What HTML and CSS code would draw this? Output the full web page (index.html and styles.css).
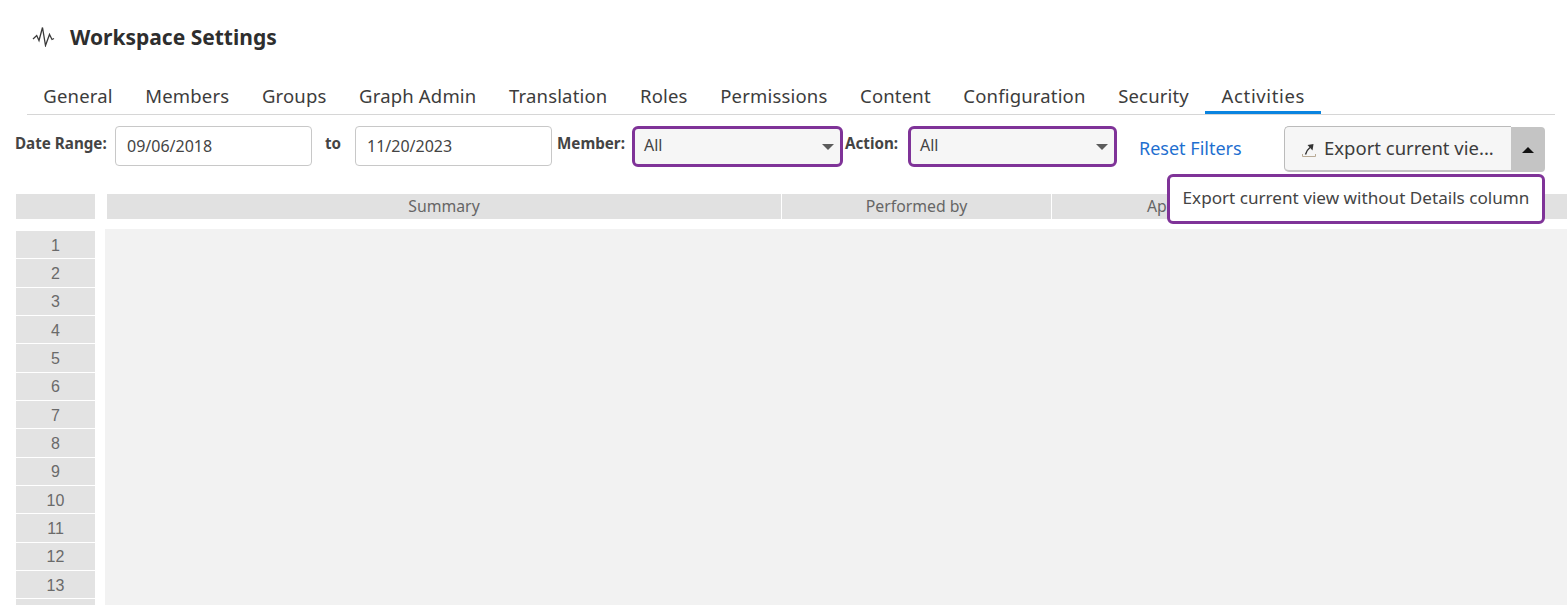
FILE: index.html
```html
<!DOCTYPE html>
<html lang="en">
<head>
  <meta charset="UTF-8">
  <title>Workspace Settings</title>
  <link rel="stylesheet" href="styles.css">
</head>
<body>

<!-- HEADER -->
<header class="page-header">
  <svg class="pulse-icon" width="24" height="20" viewBox="0 0 24 20" fill="none" stroke="#3a3a3a" stroke-width="1.300">
    <path d="M2 12 L5.700 8.500 L8 13.500 L11.500 0.500 L14.500 18.500 L18.500 7.500 L21 12.500 L23 11.500"/>
  </svg>
  <h1 class="page-title">Workspace Settings</h1>
</header>

<!-- TABS -->
<nav class="tabs">
  <a href="#" class="tab">General</a>
  <a href="#" class="tab">Members</a>
  <a href="#" class="tab">Groups</a>
  <a href="#" class="tab">Graph Admin</a>
  <a href="#" class="tab">Translation</a>
  <a href="#" class="tab">Roles</a>
  <a href="#" class="tab">Permissions</a>
  <a href="#" class="tab">Content</a>
  <a href="#" class="tab">Configuration</a>
  <a href="#" class="tab">Security</a>
  <a href="#" class="tab active">Activities</a>
</nav>

<!-- FILTERS -->
<form class="filters">
  <label class="filter-label label-date">Date Range:</label>
  <input type="text" class="date-input" value="09/06/2018">
  <label class="filter-label label-to">to</label>
  <input type="text" class="date-input" value="11/20/2023">
  <label class="filter-label label-member">Member:</label>
  <div class="select select-member">All<span class="caret"></span></div>
  <label class="filter-label label-action">Action:</label>
  <div class="select select-action">All<span class="caret"></span></div>
  <a href="#" class="reset-link">Reset Filters</a>
  <div class="export">
    <button type="button" class="export-btn">
      <svg class="export-icon" width="14" height="16" viewBox="0 0 14 16" fill="none">
        <path d="M0.500 12 V14.500 H13.500 V12" stroke="#b9ab96" stroke-width="1"/>
        <path d="M3.500 12.500 C4 10 5.500 7.500 8 5.500" stroke="#333" stroke-width="1.400"/>
        <path d="M5.500 3 L11.500 2 L10.500 8.500 Z" fill="#333"/>
      </svg>
      <span>Export current vie...</span>
    </button>
    <button type="button" class="export-toggle"><span class="caret-up"></span></button>
    <div class="export-menu">Export current view without Details column</div>
  </div>
</form>

<!-- GRID -->
<div class="grid-head">
  <div class="head-gutter"></div>
  <div class="head-cell cell-summary">Summary</div>
  <div class="head-cell cell-performed">Performed by</div>
  <div class="head-cell cell-applied">Ap</div>
</div>

<div class="grid-body">
  <div class="row-numbers">
    <div class="row-num">1</div>
    <div class="row-num">2</div>
    <div class="row-num">3</div>
    <div class="row-num">4</div>
    <div class="row-num">5</div>
    <div class="row-num">6</div>
    <div class="row-num">7</div>
    <div class="row-num">8</div>
    <div class="row-num">9</div>
    <div class="row-num">10</div>
    <div class="row-num">11</div>
    <div class="row-num">12</div>
    <div class="row-num">13</div>
    <div class="row-num"></div>
  </div>
  <div class="grid-content"></div>
</div>

</body>
</html>
```

FILE: styles.css
```css
html, body {
  height: 605px;
  overflow: hidden;
}

body {
  margin: 0;
  font-family: "Noto Sans", Arial, sans-serif;
  color: #333;
  background-color: #fff;
}

.page-header {
  display: flex;
  align-items: center;
  height: 73px;
  padding: 0 0 2px 31px;
}

.pulse-icon {
  margin-right: 15px;
}

.page-title {
  margin: 0;
  font-size: 21px;
  font-weight: 700;
  color: #2e2e2e;
}

.tabs {
  display: flex;
  height: 39px;
  margin: 0 12px 0 27px;
  border-bottom: 1px solid #d6d6d6;
}

.tab {
  display: flex;
  align-items: center;
  height: 39px;
  padding: 2px 16.300px 0;
  box-sizing: border-box;
  font-size: 18.500px;
  letter-spacing: 0.170px;
  color: #3c3c3c;
  text-decoration: none;
}

.tab.active {
  border-bottom: 3px solid #0a84e0;
  padding-top: 5px;
  letter-spacing: 0.650px;
}

.filters {
  display: flex;
  align-items: flex-start;
  height: 79px;
  padding: 11px 0 0 15px;
  box-sizing: border-box;
}

.filter-label {
  margin-top: 7px;
  font-size: 15.200px;
  font-weight: 700;
  color: #444;
}

.label-date {
  width: 100px;
}

.label-to {
  width: 30px;
  padding-left: 13px;
}

.label-member {
  width: 75px;
  margin-left: 5px;
}

.label-action {
  width: 63px;
  margin-left: 2px;
}

.date-input {
  width: 197px;
  height: 40px;
  padding: 0 11px;
  box-sizing: border-box;
  border: 1px solid #c8c8c8;
  border-radius: 4px;
  font-family: inherit;
  font-size: 16px;
  color: #444;
}

.select {
  display: flex;
  align-items: center;
  justify-content: space-between;
  height: 41px;
  padding: 0 6px 3px 9px;
  box-sizing: border-box;
  border: 3px solid #7f3398;
  border-radius: 6px;
  background-color: #f6f6f6;
  font-size: 16px;
  color: #444;
}

.select-member {
  width: 211px;
}

.select-action {
  width: 209px;
}

.caret {
  width: 0;
  height: 0;
  margin-top: 3px;
  border-left: 6px solid transparent;
  border-right: 6px solid transparent;
  border-top: 6px solid #5c5c5c;
}

.reset-link {
  margin: 10px 0 0 22px;
  width: 145px;
  font-size: 18px;
  color: #1f6fd0;
  text-decoration: none;
}

.export {
  position: relative;
  display: flex;
}

.export-btn {
  display: flex;
  align-items: center;
  width: 227px;
  height: 46px;
  padding: 0 0 2px 17px;
  border: 1px solid #bbb;
  border-bottom: 2px solid #c4c4c4;
  border-right: none;
  border-radius: 5px 0 0 5px;
  background-color: #f6f6f6;
  font-family: inherit;
  font-size: 18.500px;
  color: #3c3c3c;
}

.export-icon {
  margin: 4px 8px 0 0;
}

.export-toggle {
  display: flex;
  align-items: center;
  justify-content: center;
  width: 34px;
  height: 45px;
  margin-top: 1px;
  padding: 0;
  border: none;
  border-radius: 0 4px 4px 0;
  background-color: #c4c4c4;
}

.caret-up {
  width: 0;
  height: 0;
  border-left: 6px solid transparent;
  border-right: 6px solid transparent;
  border-bottom: 6px solid #111;
}

.export-menu {
  position: absolute;
  top: 48px;
  right: 0;
  width: 378px;
  height: 50px;
  padding-bottom: 3px;
  box-sizing: border-box;
  display: flex;
  align-items: center;
  justify-content: center;
  border: 3px solid #7f3398;
  border-radius: 6px;
  background-color: #fff;
  font-size: 17.140px;
  color: #444;
  white-space: nowrap;
}

.grid-head {
  display: flex;
  height: 25px;
  margin-left: 16px;
}

.head-gutter {
  width: 79px;
  margin-right: 12px;
  background-color: #e1e1e1;
}

.head-cell {
  display: flex;
  align-items: center;
  justify-content: center;
  padding-bottom: 2px;
  box-sizing: border-box;
  background-color: #e1e1e1;
  font-size: 15.800px;
  color: #666;
}

.cell-summary {
  width: 674px;
  margin-right: 1px;
}

.cell-performed {
  width: 269px;
  margin-right: 1px;
}

.cell-applied {
  flex: 1;
  justify-content: flex-start;
  padding-left: 95px;
}

.grid-body {
  display: flex;
  margin: 10px 0 0 16px;
}

.row-numbers {
  width: 79px;
  margin-right: 10px;
  padding-top: 2px;
}

.row-num {
  display: flex;
  align-items: center;
  justify-content: center;
  height: 27.330px;
  padding-top: 2px;
  box-sizing: border-box;
  margin-bottom: 1px;
  background-color: #e3e3e3;
  font-family: "Liberation Sans", Arial, sans-serif;
  font-size: 16px;
  color: #6a6a6a;
}

.grid-content {
  flex: 1;
  height: 376px;
  background-color: #f2f2f2;
}
```
